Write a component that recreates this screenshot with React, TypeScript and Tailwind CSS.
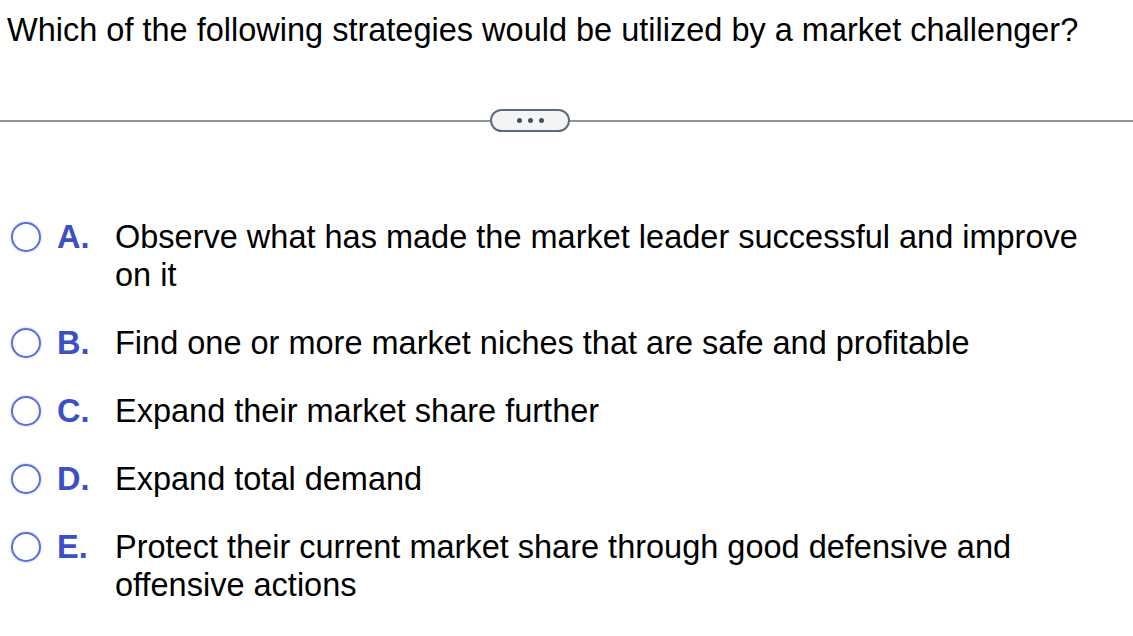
import React from "react";

const options = [
  { letter: "A.", text: "Observe what has made the market leader successful and improve on it" },
  { letter: "B.", text: "Find one or more market niches that are safe and profitable" },
  { letter: "C.", text: "Expand their market share further" },
  { letter: "D.", text: "Expand total demand" },
  { letter: "E.", text: "Protect their current market share through good defensive and offensive actions" },
];

export default function App() {
  return (
    <div className="w-[1133px] h-[636px] bg-white overflow-hidden text-black font-['Liberation_Sans',Arial,sans-serif]">
      {/* Question */}
      <div className="pl-[7px] pt-[11px] text-[32.5px] leading-[38px] whitespace-nowrap">
        Which of the following strategies would be utilized by a market challenger?
      </div>

      {/* Separator */}
      <div className="mt-[60px] flex items-center">
        <div className="flex-1 h-[2px] bg-[#8e96a4]" />
        <div className="w-[80px] h-[23px] rounded-full border-2 border-[#5f6b7a] bg-[#f3f4f6] flex items-center justify-center gap-[6px]">
          <span className="w-[5px] h-[5px] rounded-full bg-[#4a4f57]" />
          <span className="w-[5px] h-[5px] rounded-full bg-[#4a4f57]" />
          <span className="w-[5px] h-[5px] rounded-full bg-[#4a4f57]" />
        </div>
        <div className="w-[563px] h-[2px] bg-[#8e96a4]" />
      </div>

      {/* Options */}
      <div className="mt-[86px] flex flex-col gap-[30px]">
        {options.map((o) => (
          <div key={o.letter} className="flex items-start text-[32.5px] leading-[38px]">
            <div className="w-[57px] h-[38px] flex items-center pl-[11px]">
              <span className="w-[30px] h-[30px] rounded-full border-2 border-[#5a6fd6] shadow-[0_0_2px_rgba(90,111,214,0.6)]" />
            </div>
            <div className="w-[58px] font-bold text-[#3b50c6]">{o.letter}</div>
            <div className="w-[980px]">{o.text}</div>
          </div>
        ))}
      </div>
    </div>
  );
}
